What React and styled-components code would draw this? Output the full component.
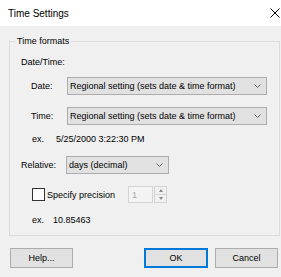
import React from "react";
import styled, { createGlobalStyle } from "styled-components";

const GlobalStyle = createGlobalStyle`
  html, body {
    margin: 0;
    padding: 0;
    background: #f0f0f0;
  }
  body {
    font-family: "Liberation Sans", Arial, sans-serif;
    font-size: 9px;
    color: #000;
  }
`;

const Dialog = styled.div`
  width: 281px;
  height: 277px;
  background: #f0f0f0;
  display: flex;
  flex-direction: column;
  overflow: hidden;
`;

const TitleBar = styled.div`
  height: 26px;
  flex: none;
  box-sizing: border-box;
  background: #fff;
  display: flex;
  align-items: center;
  justify-content: space-between;
  padding: 0 1px 0 8px;
  font-size: 10px;
`;

const GroupBox = styled.div`
  position: relative;
  box-sizing: border-box;
  width: 271px;
  height: 195px;
  margin: 15px 0 0 9px;
  border: 1px solid #dcdcdc;
  display: flex;
  flex-direction: column;
`;

const Legend = styled.span`
  position: absolute;
  top: -7px;
  left: 5px;
  padding: 0 2px;
  background: #f0f0f0;
  line-height: 13px;
`;

const Row = styled.div`
  display: flex;
  align-items: center;
  flex: none;
  height: ${(p) => p.$h}px;
  margin-top: ${(p) => p.$mt}px;
  padding-left: ${(p) => p.$pl}px;
`;

const Label = styled.span`
  width: ${(p) => p.$w}px;
  flex: none;
`;

const Combo = styled.div`
  box-sizing: border-box;
  width: ${(p) => p.$w}px;
  height: 18px;
  border: 1px solid #adadad;
  background: #e1e1e1;
  display: flex;
  align-items: center;
  justify-content: space-between;
  padding: 0 5px 0 2px;
`;

const CheckArea = styled.label`
  width: 96px;
  flex: none;
  display: flex;
  align-items: center;
  gap: 2px;
`;

const CheckBox = styled.span`
  box-sizing: border-box;
  width: 13px;
  height: 13px;
  border: 1px solid #333;
  background: #fff;
`;

const Spin = styled.div`
  display: flex;
  height: 17px;
  gap: 1px;
`;

const SpinInput = styled.div`
  box-sizing: border-box;
  width: 25px;
  height: 17px;
  border: 1px solid #d4d4d4;
  background: #f3f3f3;
  color: #a6a6a6;
  padding-left: 3px;
  display: flex;
  align-items: center;
`;

const SpinButtons = styled.div`
  box-sizing: border-box;
  width: 13px;
  height: 17px;
  border: 1px solid #d4d4d4;
  display: flex;
  flex-direction: column;
`;

const SpinHalf = styled.div`
  flex: 1;
  display: flex;
  align-items: center;
  justify-content: center;
  & + & {
    border-top: 1px solid #d4d4d4;
  }
  &::after {
    content: "";
    border-left: 2.5px solid transparent;
    border-right: 2.5px solid transparent;
    ${(p) => (p.$up ? "border-bottom" : "border-top")}: 3px solid #8a8a8a;
  }
`;

const Footer = styled.div`
  display: flex;
  justify-content: space-between;
  margin-top: 12px;
  padding: 0 3px 0 10px;
`;

const ButtonGroup = styled.div`
  display: flex;
  gap: 7px;
`;

const Button = styled.div`
  box-sizing: border-box;
  width: ${(p) => p.$w}px;
  height: 20px;
  border: 1px solid ${(p) => (p.$primary ? "#0078d7" : "#adadad")};
  box-shadow: ${(p) => (p.$primary ? "inset 0 0 0 1px #0078d7" : "none")};
  background: #e1e1e1;
  display: flex;
  align-items: center;
  justify-content: center;
`;

const Chevron = () => (
  <svg width="7" height="4" viewBox="0 0 7 4">
    <path d="M0.5 0.5 L3.5 3.5 L6.5 0.5" fill="none" stroke="#606060" strokeWidth="1" />
  </svg>
);

const CloseIcon = () => (
  <svg width="10" height="10" viewBox="0 0 10 10">
    <path d="M0.5 0.5 L9.5 9.5 M9.5 0.5 L0.5 9.5" stroke="#000" strokeWidth="1" />
  </svg>
);

const App = () => (
  <>
    <GlobalStyle />
    <Dialog>
      <TitleBar>
        <span>Time Settings</span>
        <CloseIcon />
      </TitleBar>
      <GroupBox>
        <Legend>Time formats</Legend>
        <Row $h={15} $mt={12} $pl={11}>Date/Time:</Row>
        <Row $h={19} $mt={7} $pl={21}>
          <Label $w={36}>Date:</Label>
          <Combo $w={200}>
            <span>Regional setting (sets date &amp; time format)</span>
            <Chevron />
          </Combo>
        </Row>
        <Row $h={19} $mt={11} $pl={21}>
          <Label $w={36}>Time:</Label>
          <Combo $w={200}>
            <span>Regional setting (sets date &amp; time format)</span>
            <Chevron />
          </Combo>
        </Row>
        <Row $h={14} $mt={7} $pl={22}>
          <Label $w={24}>ex.</Label>
          <span>5/25/2000 3:22:30 PM</span>
        </Row>
        <Row $h={18} $mt={10} $pl={11}>
          <Label $w={45}>Relative:</Label>
          <Combo $w={103}>
            <span>days (decimal)</span>
            <Chevron />
          </Combo>
        </Row>
        <Row $h={17} $mt={12} $pl={22}>
          <CheckArea>
            <CheckBox />
            <span>Specify precision</span>
          </CheckArea>
          <Spin>
            <SpinInput>1</SpinInput>
            <SpinButtons>
              <SpinHalf $up />
              <SpinHalf />
            </SpinButtons>
          </Spin>
        </Row>
        <Row $h={14} $mt={10} $pl={22}>
          <Label $w={21}>ex.</Label>
          <span>10.85463</span>
        </Row>
      </GroupBox>
      <Footer>
        <Button $w={63}>Help...</Button>
        <ButtonGroup>
          <Button $w={64} $primary>OK</Button>
          <Button $w={63}>Cancel</Button>
        </ButtonGroup>
      </Footer>
    </Dialog>
  </>
);

export default App;
